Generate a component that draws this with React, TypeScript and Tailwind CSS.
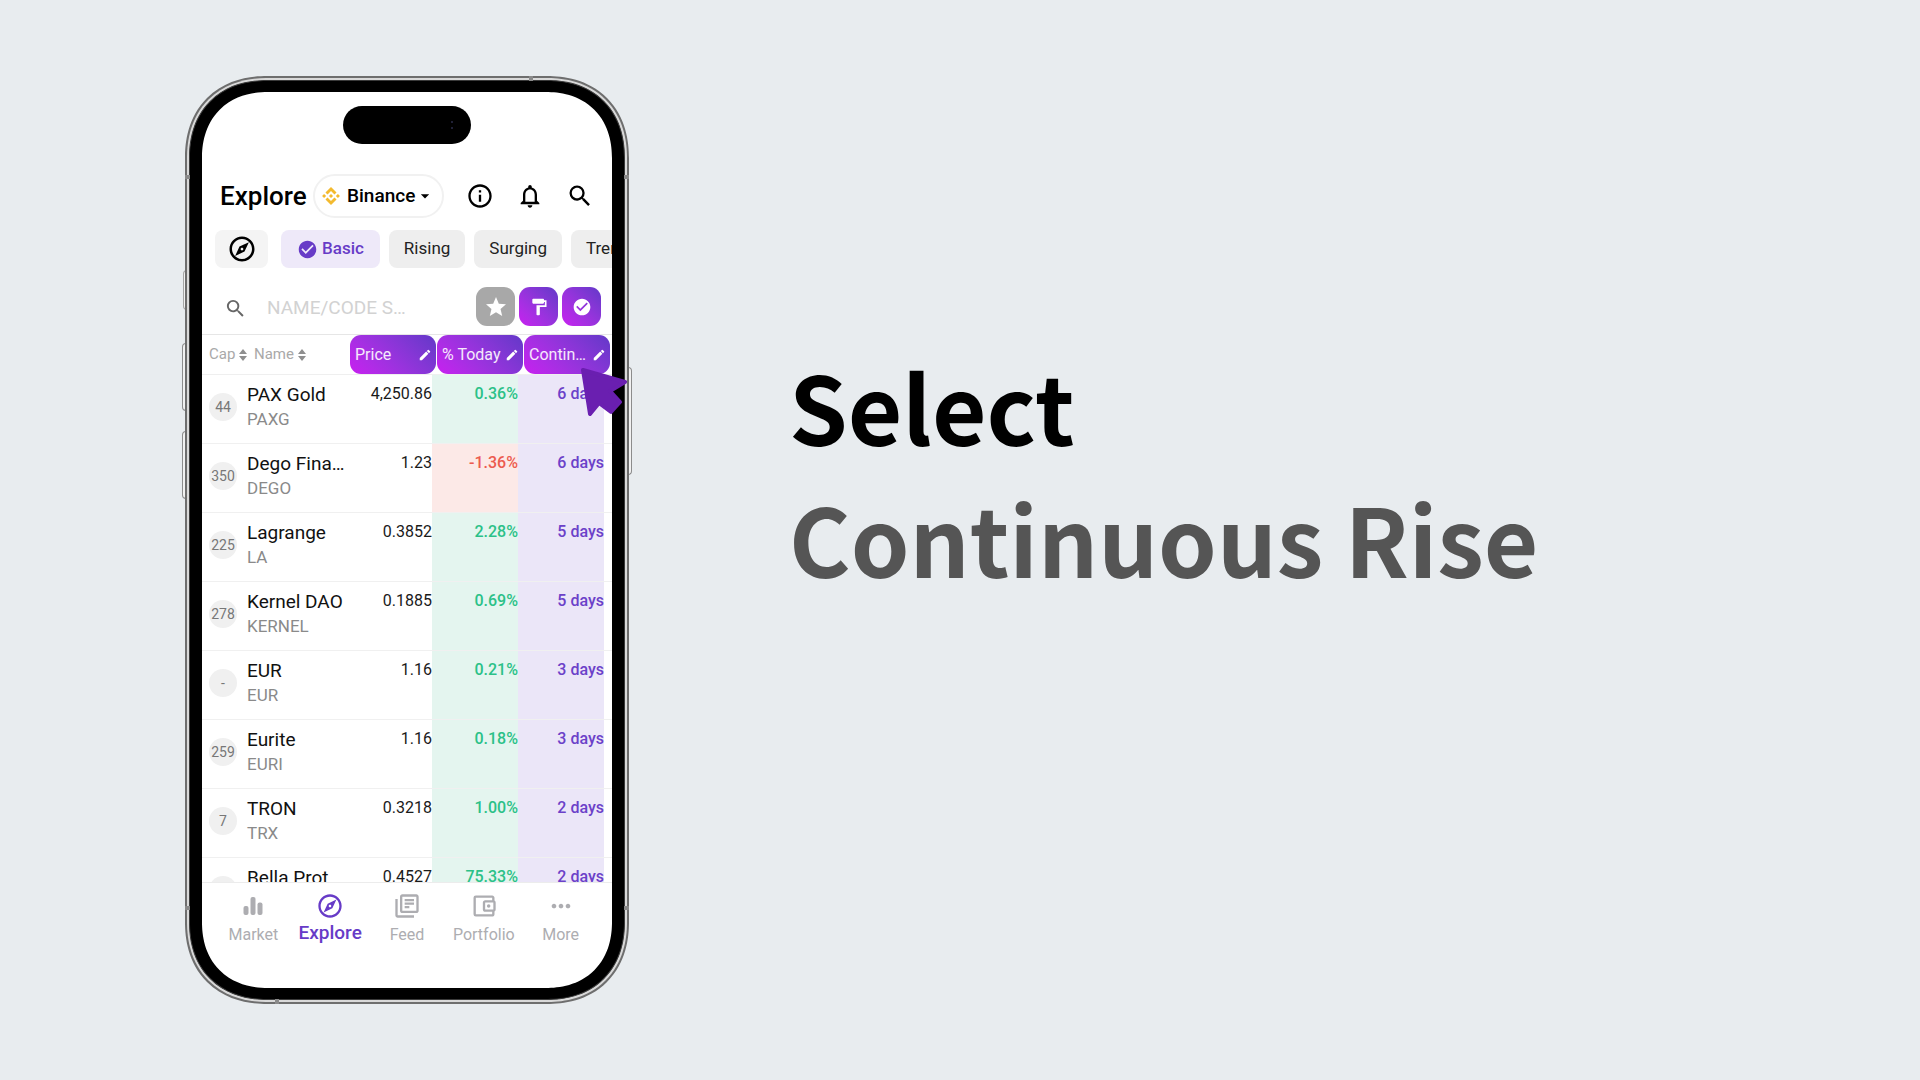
import {
  MdInfoOutline,
  MdNotificationsNone,
  MdSearch,
  MdOutlineExplore,
  MdCheckCircle,
  MdStar,
  MdFormatPaint,
  MdEdit,
  MdOutlineLibraryBooks,
  MdOutlineAccountBalanceWallet,
  MdMoreHoriz,
  MdArrowDropDown,
} from "react-icons/md";

type Coin = {
  rank: string;
  name: string;
  code: string;
  price: string;
  change: string;
  days: string;
};

const coins: Coin[] = [
  { rank: "44", name: "PAX Gold", code: "PAXG", price: "4,250.86", change: "0.36%", days: "6 days" },
  { rank: "350", name: "Dego Fina…", code: "DEGO", price: "1.23", change: "-1.36%", days: "6 days" },
  { rank: "225", name: "Lagrange", code: "LA", price: "0.3852", change: "2.28%", days: "5 days" },
  { rank: "278", name: "Kernel DAO", code: "KERNEL", price: "0.1885", change: "0.69%", days: "5 days" },
  { rank: "-", name: "EUR", code: "EUR", price: "1.16", change: "0.21%", days: "3 days" },
  { rank: "259", name: "Eurite", code: "EURI", price: "1.16", change: "0.18%", days: "3 days" },
  { rank: "7", name: "TRON", code: "TRX", price: "0.3218", change: "1.00%", days: "2 days" },
  { rank: "", name: "Bella Prot…", code: "", price: "0.4527", change: "75.33%", days: "2 days" },
];

function BinanceLogo() {
  return (
    <svg viewBox="0 0 24 24" className="size-[18px] fill-[#f3ba2f]" aria-hidden="true">
      <path d="M7.34 10.15 12 5.49l4.66 4.66 2.71-2.71L12 .07 4.63 7.44zM.07 12l2.71-2.71L5.49 12l-2.71 2.71zM7.34 13.85 12 18.51l4.66-4.66 2.71 2.71L12 23.93l-7.37-7.37zM18.51 12l2.71-2.71L23.93 12l-2.71 2.71zM12 9.25 14.75 12 12 14.75 9.25 12z" />
    </svg>
  );
}

function SortIcon() {
  return (
    <svg viewBox="0 0 8 12" className="h-3 w-2 fill-[#8f8f8f]" aria-hidden="true">
      <path d="M4 0 8 5H0zM4 12 0 7h8z" />
    </svg>
  );
}

function MarketIcon() {
  return (
    <svg viewBox="0 0 24 24" className="size-6" fill="currentColor" aria-hidden="true">
      <rect x="2.500" y="12" width="5" height="9" rx="2" />
      <rect x="9.500" y="3" width="5" height="18" rx="2" />
      <rect x="16.500" y="8.500" width="5" height="12.500" rx="2" />
    </svg>
  );
}

function Cursor() {
  return (
    <svg viewBox="0 0 48 52" className="absolute top-[290px] left-[394px] z-20 h-[52px] w-12" aria-hidden="true">
      <path
        d="M4 4 46 16 31 25 41 36 32 46 20 37 11 48Z"
        fill="#6a1fb0"
        stroke="#6a1fb0"
        strokeWidth="4"
        strokeLinejoin="round"
      />
    </svg>
  );
}

function TopBar() {
  return (
    <header className="flex items-center pt-[30px] pr-[18px] pl-[18px]">
      <h2 className="w-[93px] text-[26px] leading-8 font-medium text-black">Explore</h2>
      <label className="relative flex h-11 items-center rounded-full border-2 border-[#f1f1f1] pl-[7px]">
        <BinanceLogo />
        <select
          aria-label="Exchange"
          className="h-10 w-[102px] appearance-none rounded-full bg-transparent pl-[7px] text-[19px] font-medium text-black outline-none"
        >
          <option>Binance</option>
        </select>
        <MdArrowDropDown className="pointer-events-none absolute right-[7px] size-5" />
      </label>
      <div className="ml-auto flex items-center gap-[22px]">
        <button aria-label="Information"><MdInfoOutline className="size-7" /></button>
        <button aria-label="Notifications"><MdNotificationsNone className="size-7" /></button>
        <button aria-label="Search"><MdSearch className="size-7" /></button>
      </div>
    </header>
  );
}

function Chips() {
  return (
    <div className="mt-3 flex h-[38px] shrink-0 overflow-hidden pl-[13px] text-[17px] text-[#222]">
      <button aria-label="Discover" className="mr-[13px] flex w-[53px] shrink-0 items-center justify-center rounded-lg bg-[#f4f4f4] text-black">
        <MdOutlineExplore className="size-[30px]" />
      </button>
      <div className="flex gap-[9px]">
        <button className="flex shrink-0 items-center gap-1 rounded-lg bg-[#eee9f9] px-4 font-medium text-[#673bc7]">
          <MdCheckCircle className="size-[21px]" />
          Basic
        </button>
        <button className="shrink-0 rounded-lg bg-[#eee] px-[15px]">Rising</button>
        <button className="shrink-0 rounded-lg bg-[#eee] px-[15px]">Surging</button>
        <button className="shrink-0 rounded-lg bg-[#eee] px-[15px]">Trending</button>
      </div>
    </div>
  );
}

function SearchRow() {
  return (
    <div className="mt-[19px] flex shrink-0 items-center gap-1 border-b border-[#e6e6e6] pr-[11px] pb-2 pl-[22px]">
      <label className="flex min-w-0 flex-1 items-center gap-5 pt-1">
        <MdSearch className="size-[23px] shrink-0 text-[#666]" />
        <input
          type="text"
          aria-label="Search by name or code"
          placeholder="NAME/CODE S…"
          className="w-full min-w-0 bg-transparent text-[19px] outline-none placeholder:text-[#d2d2d2]"
        />
      </label>
      <button aria-label="Favourites" className="flex size-[39px] items-center justify-center rounded-[11px] bg-[#a8a8a8] text-white">
        <MdStar className="size-6" />
      </button>
      <button aria-label="Colours" className="flex size-[39px] items-center justify-center rounded-[11px] bg-linear-45 from-[#c81ef0] to-[#6238c8] text-white">
        <MdFormatPaint className="size-5" />
      </button>
      <button aria-label="Filters" className="flex size-[39px] items-center justify-center rounded-[11px] bg-linear-45 from-[#c81ef0] to-[#6238c8] text-white">
        <MdCheckCircle className="size-5" />
      </button>
    </div>
  );
}

function ColumnButton({ label }: { label: string }) {
  return (
    <th scope="col" className="font-normal">
      <button className="flex h-[39px] w-[86px] items-center justify-between rounded-[11px] bg-linear-45 from-[#c81ef0] to-[#6238c8] pr-1 pl-[5px] text-base text-white/90">
        <span className="whitespace-nowrap">{label}</span>
        <MdEdit className="size-[14px] shrink-0 text-white" />
      </button>
    </th>
  );
}

function CoinTable() {
  return (
    <div className="min-h-0 flex-1 overflow-hidden">
      <table className="block w-full">
        <thead className="block">
          <tr className="flex h-10 items-center gap-px border-b border-[#efefef] pr-[2px] pl-[7px] text-[15px] text-[#a9a9a9]">
            <th scope="col" className="w-11 font-normal">
              <button className="flex items-center gap-1">Cap <SortIcon /></button>
            </th>
            <th scope="col" className="flex-1 font-normal">
              <button className="flex items-center gap-1">Name <SortIcon /></button>
            </th>
            <ColumnButton label="Price" />
            <ColumnButton label="% Today" />
            <ColumnButton label="Contin…" />
          </tr>
        </thead>
        <tbody className="block">
          {coins.map((coin) => {
            const falling = coin.change.startsWith("-");
            return (
              <tr key={coin.name} className="flex h-[69px] border-b border-[#f0f0f0] pr-2 pl-[7px] text-base">
                <td className="flex w-[38px] items-center pb-1">
                  <span className="flex size-7 items-center justify-center rounded-full bg-[#f0f0f0] text-sm text-[#777]">
                    {coin.rank}
                  </span>
                </td>
                <td className="pt-2 whitespace-nowrap text-[#111]">
                  <div className="text-[19px] leading-6">{coin.name}</div>
                  <div className="text-[17px] leading-6 text-[#8a8a8a]">{coin.code}</div>
                </td>
                <td className="flex-1 pt-[7px] text-right leading-6 text-[#1a1a1a]">{coin.price}</td>
                <td
                  className={
                    falling
                      ? "w-[86px] bg-[#fce9e7] pt-[7px] text-right leading-6 font-medium text-[#ec5b4f]"
                      : "w-[86px] bg-[#e4f5ef] pt-[7px] text-right leading-6 font-medium text-[#2bc188]"
                  }
                >
                  {coin.change}
                </td>
                <td className="w-[86px] bg-[#ebe6f8] pt-[7px] text-right leading-6 font-medium text-[#6b41c9]">
                  {coin.days}
                </td>
              </tr>
            );
          })}
        </tbody>
      </table>
    </div>
  );
}

function BottomNav() {
  return (
    <nav className="grid h-[106px] shrink-0 grid-cols-5 items-start border-t border-[#ececec] px-[13px] pt-[9px] text-base text-[#adadb1]">
      <a href="#market" className="flex flex-col items-center gap-[3px]">
        <span className="flex size-7 items-center justify-center"><MarketIcon /></span>
        Market
      </a>
      <a href="#explore" aria-current="page" className="flex flex-col items-center gap-px text-[19px] leading-6 font-medium text-[#673bc7]">
        <MdOutlineExplore className="size-7" />
        Explore
      </a>
      <a href="#feed" className="flex flex-col items-center gap-[3px]">
        <MdOutlineLibraryBooks className="size-7" />
        Feed
      </a>
      <a href="#portfolio" className="flex flex-col items-center gap-[3px]">
        <MdOutlineAccountBalanceWallet className="size-7" />
        Portfolio
      </a>
      <a href="#more" className="flex flex-col items-center gap-[3px]">
        <MdMoreHoriz className="size-7" />
        More
      </a>
    </nav>
  );
}

function Phone() {
  return (
    <div className="relative w-[444px] shrink-0 font-['Roboto',sans-serif]">
      <span className="absolute top-[194px] -left-[2px] h-10 w-1 rounded-l-sm border border-[#a5a5a5] bg-[#f1f1f1]" />
      <span className="absolute top-[267px] -left-[3px] h-[68px] w-1 rounded-l-sm border border-[#8c8c8c] bg-[#f1f1f1]" />
      <span className="absolute top-[355px] -left-[3px] h-[68px] w-1 rounded-l-sm border border-[#8c8c8c] bg-[#f1f1f1]" />
      <span className="absolute top-[291px] -right-[3px] h-[108px] w-1 rounded-r-sm border border-[#8c8c8c] bg-[#f1f1f1]" />
      <div className="relative rounded-[82px] border-2 border-[#6e6e6e] bg-[#d9d9d9] p-[2px] [corner-shape:superellipse(1.15)]">
        <span className="absolute top-[97px] -left-[2px] h-1 w-[5px] bg-[#8a8a8a]" />
        <span className="absolute top-[97px] -right-[2px] h-1 w-[5px] bg-[#8a8a8a]" />
        <span className="absolute bottom-[92px] -left-[2px] h-1 w-[5px] bg-[#8a8a8a]" />
        <span className="absolute -right-[2px] bottom-[92px] h-1 w-[5px] bg-[#8a8a8a]" />
        <span className="absolute -top-[2px] right-[94px] h-[5px] w-1 bg-[#8a8a8a]" />
        <span className="absolute -bottom-[2px] left-[88px] h-[5px] w-1 bg-[#8a8a8a]" />
        <div className="rounded-[78px] border border-[#3a3a3a] bg-black px-3 py-[11px] [corner-shape:superellipse(1.15)]">
          <div className="flex aspect-[410/896] flex-col overflow-hidden rounded-[66px] bg-white pt-[14px] [corner-shape:superellipse(1.15)]">
            <div className="flex h-[38px] w-32 shrink-0 items-center justify-end self-center rounded-full bg-black pr-[18px]">
              <span className="flex flex-col gap-1">
                <i className="size-[2px] rounded-full bg-[#2b2d4a]" />
                <i className="size-[2px] rounded-full bg-[#2b2d4a]" />
              </span>
            </div>
            <TopBar />
            <Chips />
            <SearchRow />
            <CoinTable />
            <BottomNav />
          </div>
        </div>
      </div>
      <Cursor />
    </div>
  );
}

export default function App() {
  return (
    <main className="flex min-h-screen items-center gap-40 overflow-hidden bg-[#e8ecef] px-[185px] py-10">
      <Phone />
      <h1 className="pb-[139px] font-['Noto_Sans_CJK_SC',sans-serif] text-[94px] leading-[132px] font-bold whitespace-nowrap text-[#555]">
        <span className="block text-black">Select</span>
        <span className="block">Continuous Rise</span>
      </h1>
    </main>
  );
}
